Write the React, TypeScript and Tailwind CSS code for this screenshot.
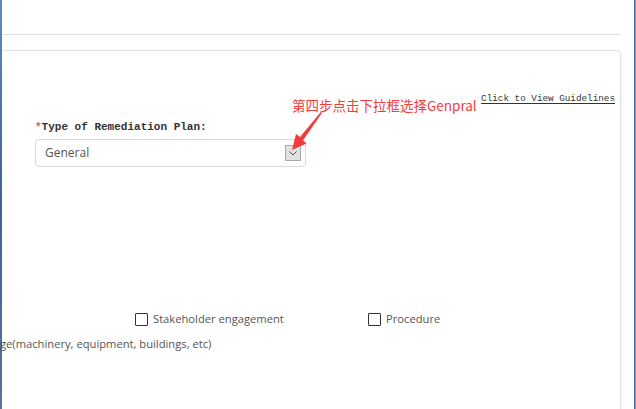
import React from "react";

const SANS = { fontFamily: '"Open Sans", "Noto Sans", sans-serif' };
const MONO = { fontFamily: '"Liberation Mono", "DejaVu Sans Mono", monospace' };

function Checkbox({ label, width }: { label: string; width?: string }) {
  return (
    <label className={`flex items-center gap-[5px] ${width ?? ""}`}>
      <span className="block h-[13px] w-[13px] shrink-0 rounded-[1px] border border-[#333] bg-white" />
      <span className="text-[11.2px] leading-[16px] text-[#555]" style={SANS}>
        {label}
      </span>
    </label>
  );
}

export default function App() {
  return (
    <div className="relative flex h-[409px] w-[636px] overflow-hidden bg-white">
      {/* desktop showing through on the left */}
      <div className="w-[2px] shrink-0 bg-gradient-to-b from-[#5a8cc0] via-[#3f629c] to-[#55739f]" />

      <div className="flex w-[619px] shrink-0 flex-col">
        <div className="h-[34px]" />
        <div className="border-t border-[#dcdcdc]" />
        <div className="h-[15px]" />

        <div className="flex-1 rounded-tr-[5px] border-t border-r border-[#e3e3e3] shadow-[1px_0_2px_rgba(0,0,0,0.06)]">
          <div className="flex justify-end pr-[5px] pt-[42px]">
            <a
              className="text-[9.3px] leading-[12px] text-[#333] underline underline-offset-[2px]"
              style={MONO}
            >
              Click to View Guidelines
            </a>
          </div>

          <div className="ml-[33px] mt-[15px]">
            <div className="text-[11px] font-bold leading-[14px] text-[#333]" style={MONO}>
              <span className="text-[#e0602a]">*</span>Type of Remediation Plan:
            </div>
            <div className="mt-[5px] flex h-[28px] w-[271px] items-center justify-between rounded-[4px] border border-[#dadada] pl-[9px] pr-[4px]">
              <span className="text-[12px] text-[#555]" style={SANS}>
                General
              </span>
              <span className="flex h-[16px] w-[16px] items-center justify-center border border-[#a8a8a8] bg-[#e2e2e2]">
                <svg width="8" height="5" viewBox="0 0 8 5">
                  <path d="M0.5 0.5 L4 4 L7.5 0.5" fill="none" stroke="#555" strokeWidth="1" />
                </svg>
              </span>
            </div>
          </div>

          <div className="mt-[143px] flex h-[18px] items-center pl-[133px]">
            <Checkbox label="Stakeholder engagement" width="w-[233px]" />
            <Checkbox label="Procedure" />
          </div>

          <div className="ml-[-2px] mt-[8px] text-[11.2px] leading-[16px] text-[#555]" style={SANS}>
            ge(machinery, equipment, buildings, etc)
          </div>
        </div>
      </div>

      <div className="w-[13px] shrink-0" />
      <div className="w-[1px] shrink-0 bg-[#50649a]" />
      <div className="w-[1px] shrink-0 bg-[#8a97b8]" />

      {/* red annotation over the page */}
      <div
        className="absolute left-[292px] top-[96px] text-[13.5px] leading-[18px] text-[#f53c3c]"
        style={{ fontFamily: '"Noto Sans CJK SC", "Noto Sans", sans-serif' }}
      >
        第四步点击下拉框选择Genpral
      </div>
      <svg className="absolute left-[288px] top-[111px]" width="36" height="42" viewBox="0 0 36 42">
        <polygon
          points="32.4,1.5 12,26 8,23 4,39 18.5,32.5 15,29.6 33.6,2.5"
          fill="#f53c3c"
        />
      </svg>
    </div>
  );
}
